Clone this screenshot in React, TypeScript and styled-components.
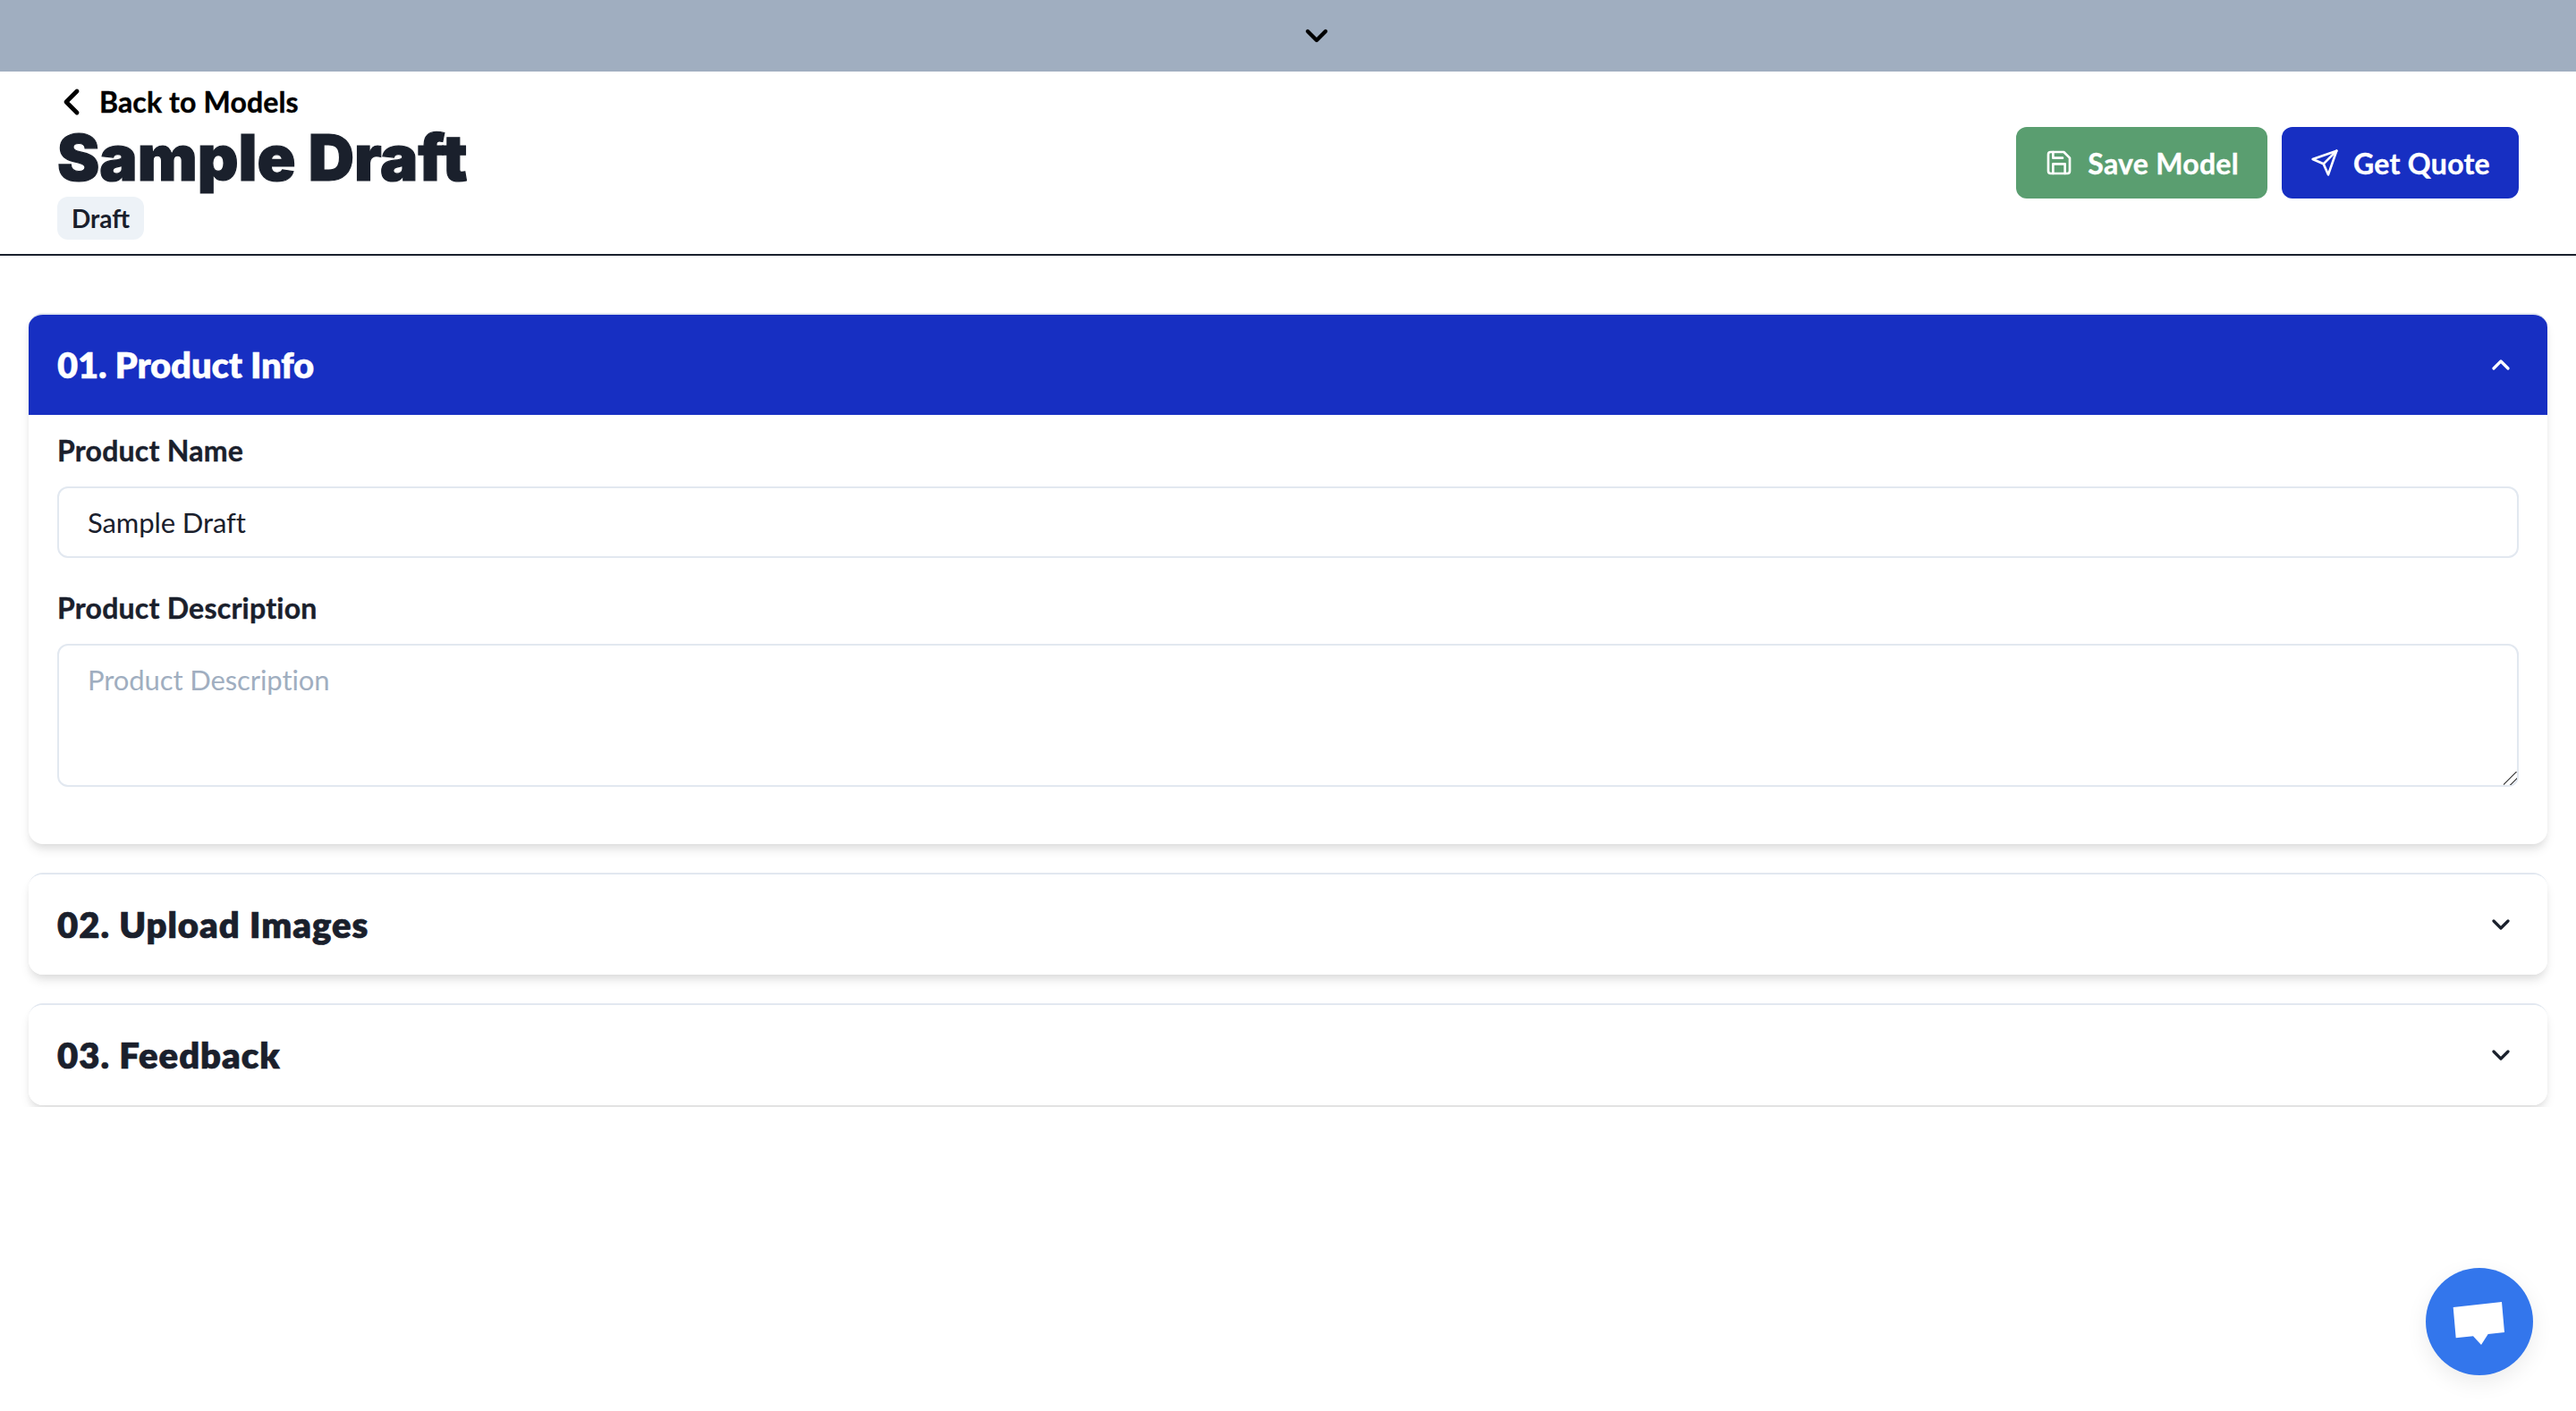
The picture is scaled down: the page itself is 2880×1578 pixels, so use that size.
import React from "react";
import styled, { createGlobalStyle } from "styled-components";
import { ChevronDown, ChevronLeft, ChevronUp } from "lucide-react";

const colors = {
  ink: "#1a202c",
  blue: "#172fc2",
  green: "#5a9e70",
  line: "#e2e8f0",
  muted: "#a0aec0",
  chip: "#edf2f7",
  chat: "#3376ec",
};

const GlobalStyle = createGlobalStyle`
  html, body {
    margin: 0;
    background: #fff;
    color: ${colors.ink};
    font-family: Lato, "Open Sans", sans-serif;
  }
  * { box-sizing: border-box; }
`;

const TopBar = styled.div`
  height: 80px;
  padding-left: 64px;
  background: ${colors.muted};
  color: #000;
  display: flex;
  align-items: center;
  justify-content: center;
`;

const Header = styled.header`
  height: 206px;
  padding: 0 64px;
  border-bottom: 2px solid ${colors.ink};
  display: flex;
  align-items: center;
  justify-content: space-between;
`;

const TitleBlock = styled.div`
  margin-top: -7px;
  display: flex;
  flex-direction: column;
  align-items: flex-start;
`;

const BackLink = styled.a`
  height: 48px;
  display: flex;
  align-items: center;
  gap: 7px;
  margin-left: -8px;
  color: #000;
  font-size: 32px;
  font-weight: 700;
  letter-spacing: 0.15px;
  -webkit-text-stroke: 0.4px #000;
`;

const Title = styled.h1`
  margin: 2px 0 8px;
  font-family: Inter, Lato, sans-serif;
  font-size: 71px;
  line-height: 72px;
  font-weight: 900;
  letter-spacing: 0;
  -webkit-text-stroke: 1.2px ${colors.ink};
`;

const Badge = styled.span`
  height: 48px;
  padding: 0 16px;
  display: flex;
  align-items: center;
  border-radius: 12px;
  background: ${colors.chip};
  font-size: 28px;
  font-weight: 700;
`;

const Actions = styled.div`
  display: flex;
  gap: 16px;
`;

const ActionButton = styled.button<{ $bg: string }>`
  height: 80px;
  padding: 0 32px;
  border: 0;
  border-radius: 12px;
  background: ${(p) => p.$bg};
  color: #fff;
  display: flex;
  align-items: center;
  gap: 16px;
  font-family: inherit;
  font-size: 32px;
  font-weight: 700;
  letter-spacing: 0.3px;
  -webkit-text-stroke: 0.4px #fff;
`;

const Main = styled.main`
  padding: 64px 32px 2px;
  overflow: hidden;
  display: flex;
  flex-direction: column;
  gap: 32px;
`;

const Section = styled.section`
  border-top: 2px solid ${colors.line};
  border-radius: 16px;
  overflow: hidden;
  background: #fff;
  box-shadow: 0 8px 12px -2px rgba(0, 0, 0, 0.1), 0 4px 8px -2px rgba(0, 0, 0, 0.06);
`;

const SectionHead = styled.div<{ $open?: boolean }>`
  height: 112px;
  padding: 0 36px 0 32px;
  display: flex;
  align-items: center;
  justify-content: space-between;
  background: ${(p) => (p.$open ? colors.blue : "#fff")};
  color: ${(p) => (p.$open ? "#fff" : colors.ink)};
`;

const SectionTitle = styled.h2<{ $open?: boolean }>`
  margin: 0;
  font-size: 40px;
  font-weight: 800;
  letter-spacing: ${(p) => (p.$open ? -0.2 : 1)}px;
  -webkit-text-stroke: ${(p) => (p.$open ? 0.3 : 0.7)}px currentColor;
`;

const SectionBody = styled.div`
  padding: 16px 32px 32px;
`;

const Field = styled.div`
  margin-bottom: 32px;
`;

const Label = styled.label`
  display: block;
  height: 48px;
  margin-bottom: 16px;
  font-size: 32px;
  line-height: 48px;
  font-weight: 700;
  letter-spacing: 0.25px;
  -webkit-text-stroke: 0.4px currentColor;
`;

const fieldStyles = `
  display: block;
  width: 100%;
  padding: 0 32px;
  border: 2px solid ${colors.line};
  border-radius: 12px;
  background: #fff;
  color: ${colors.ink};
  font-family: inherit;
  font-size: 31px;
  letter-spacing: -0.1px;
  outline: none;
  &::placeholder { color: ${colors.muted}; opacity: 1; }
`;

const TextInput = styled.input`
  ${fieldStyles}
  height: 80px;
`;

const TextArea = styled.textarea`
  ${fieldStyles}
  height: 160px;
  padding-top: 14px;
  padding-bottom: 16px;
  line-height: 48px;
  &::-webkit-resizer {
    background: linear-gradient(
      135deg,
      transparent 0 46%,
      #666 46% 53%,
      transparent 53% 72%,
      #666 72% 79%,
      transparent 79%
    );
  }
`;

const ChatButton = styled.button`
  position: fixed;
  left: 2712px;
  top: 1418px;
  width: 120px;
  height: 120px;
  padding: 0;
  border: 0;
  border-radius: 50%;
  background: ${colors.chat};
  box-shadow: 0 8px 24px rgba(0, 0, 0, 0.08);
`;

const SaveIcon = () => (
  <svg width="32" height="32" viewBox="0 0 24 24" fill="none" stroke="currentColor" strokeWidth="2" strokeLinecap="round" strokeLinejoin="round">
    <path d="M19 21H5a2 2 0 0 1-2-2V5a2 2 0 0 1 2-2h11l5 5v11a2 2 0 0 1-2 2z" />
    <polyline points="17 21 17 13 7 13 7 21" />
    <polyline points="7 3 7 8 15 8" />
  </svg>
);

const SendIcon = () => (
  <svg width="32" height="32" viewBox="0 0 24 24" fill="none" stroke="currentColor" strokeWidth="2" strokeLinecap="round" strokeLinejoin="round">
    <line x1="22" y1="2" x2="11" y2="13" />
    <polygon points="22 2 15 22 11 13 2 9 22 2" />
  </svg>
);

const ChatIcon = () => (
  <svg width="120" height="120" viewBox="0 0 120 120">
    <polygon fill="#fff" points="30.7,44 85,38 88,72 69.7,74 62,86 53,76.3 33.7,78.3" />
  </svg>
);

export default function App() {
  return (
    <>
      <GlobalStyle />
      <TopBar>
        <ChevronDown size={40} strokeWidth={2.6} />
      </TopBar>
      <Header>
        <TitleBlock>
          <BackLink>
            <ChevronLeft size={48} strokeWidth={2.4} />
            Back to Models
          </BackLink>
          <Title>Sample Draft</Title>
          <Badge>Draft</Badge>
        </TitleBlock>
        <Actions>
          <ActionButton $bg={colors.green}>
            <SaveIcon />
            Save Model
          </ActionButton>
          <ActionButton $bg={colors.blue}>
            <SendIcon />
            Get Quote
          </ActionButton>
        </Actions>
      </Header>
      <Main>
        <Section>
          <SectionHead $open>
            <SectionTitle $open>01. Product Info</SectionTitle>
            <ChevronUp size={32} strokeWidth={2.4} />
          </SectionHead>
          <SectionBody>
            <Field>
              <Label>Product Name</Label>
              <TextInput defaultValue="Sample Draft" />
            </Field>
            <Field>
              <Label>Product Description</Label>
              <TextArea placeholder="Product Description" />
            </Field>
          </SectionBody>
        </Section>
        <Section>
          <SectionHead>
            <SectionTitle>02. Upload Images</SectionTitle>
            <ChevronDown size={32} strokeWidth={2.4} />
          </SectionHead>
        </Section>
        <Section>
          <SectionHead>
            <SectionTitle>03. Feedback</SectionTitle>
            <ChevronDown size={32} strokeWidth={2.4} />
          </SectionHead>
        </Section>
      </Main>
      <ChatButton>
        <ChatIcon />
      </ChatButton>
    </>
  );
}
